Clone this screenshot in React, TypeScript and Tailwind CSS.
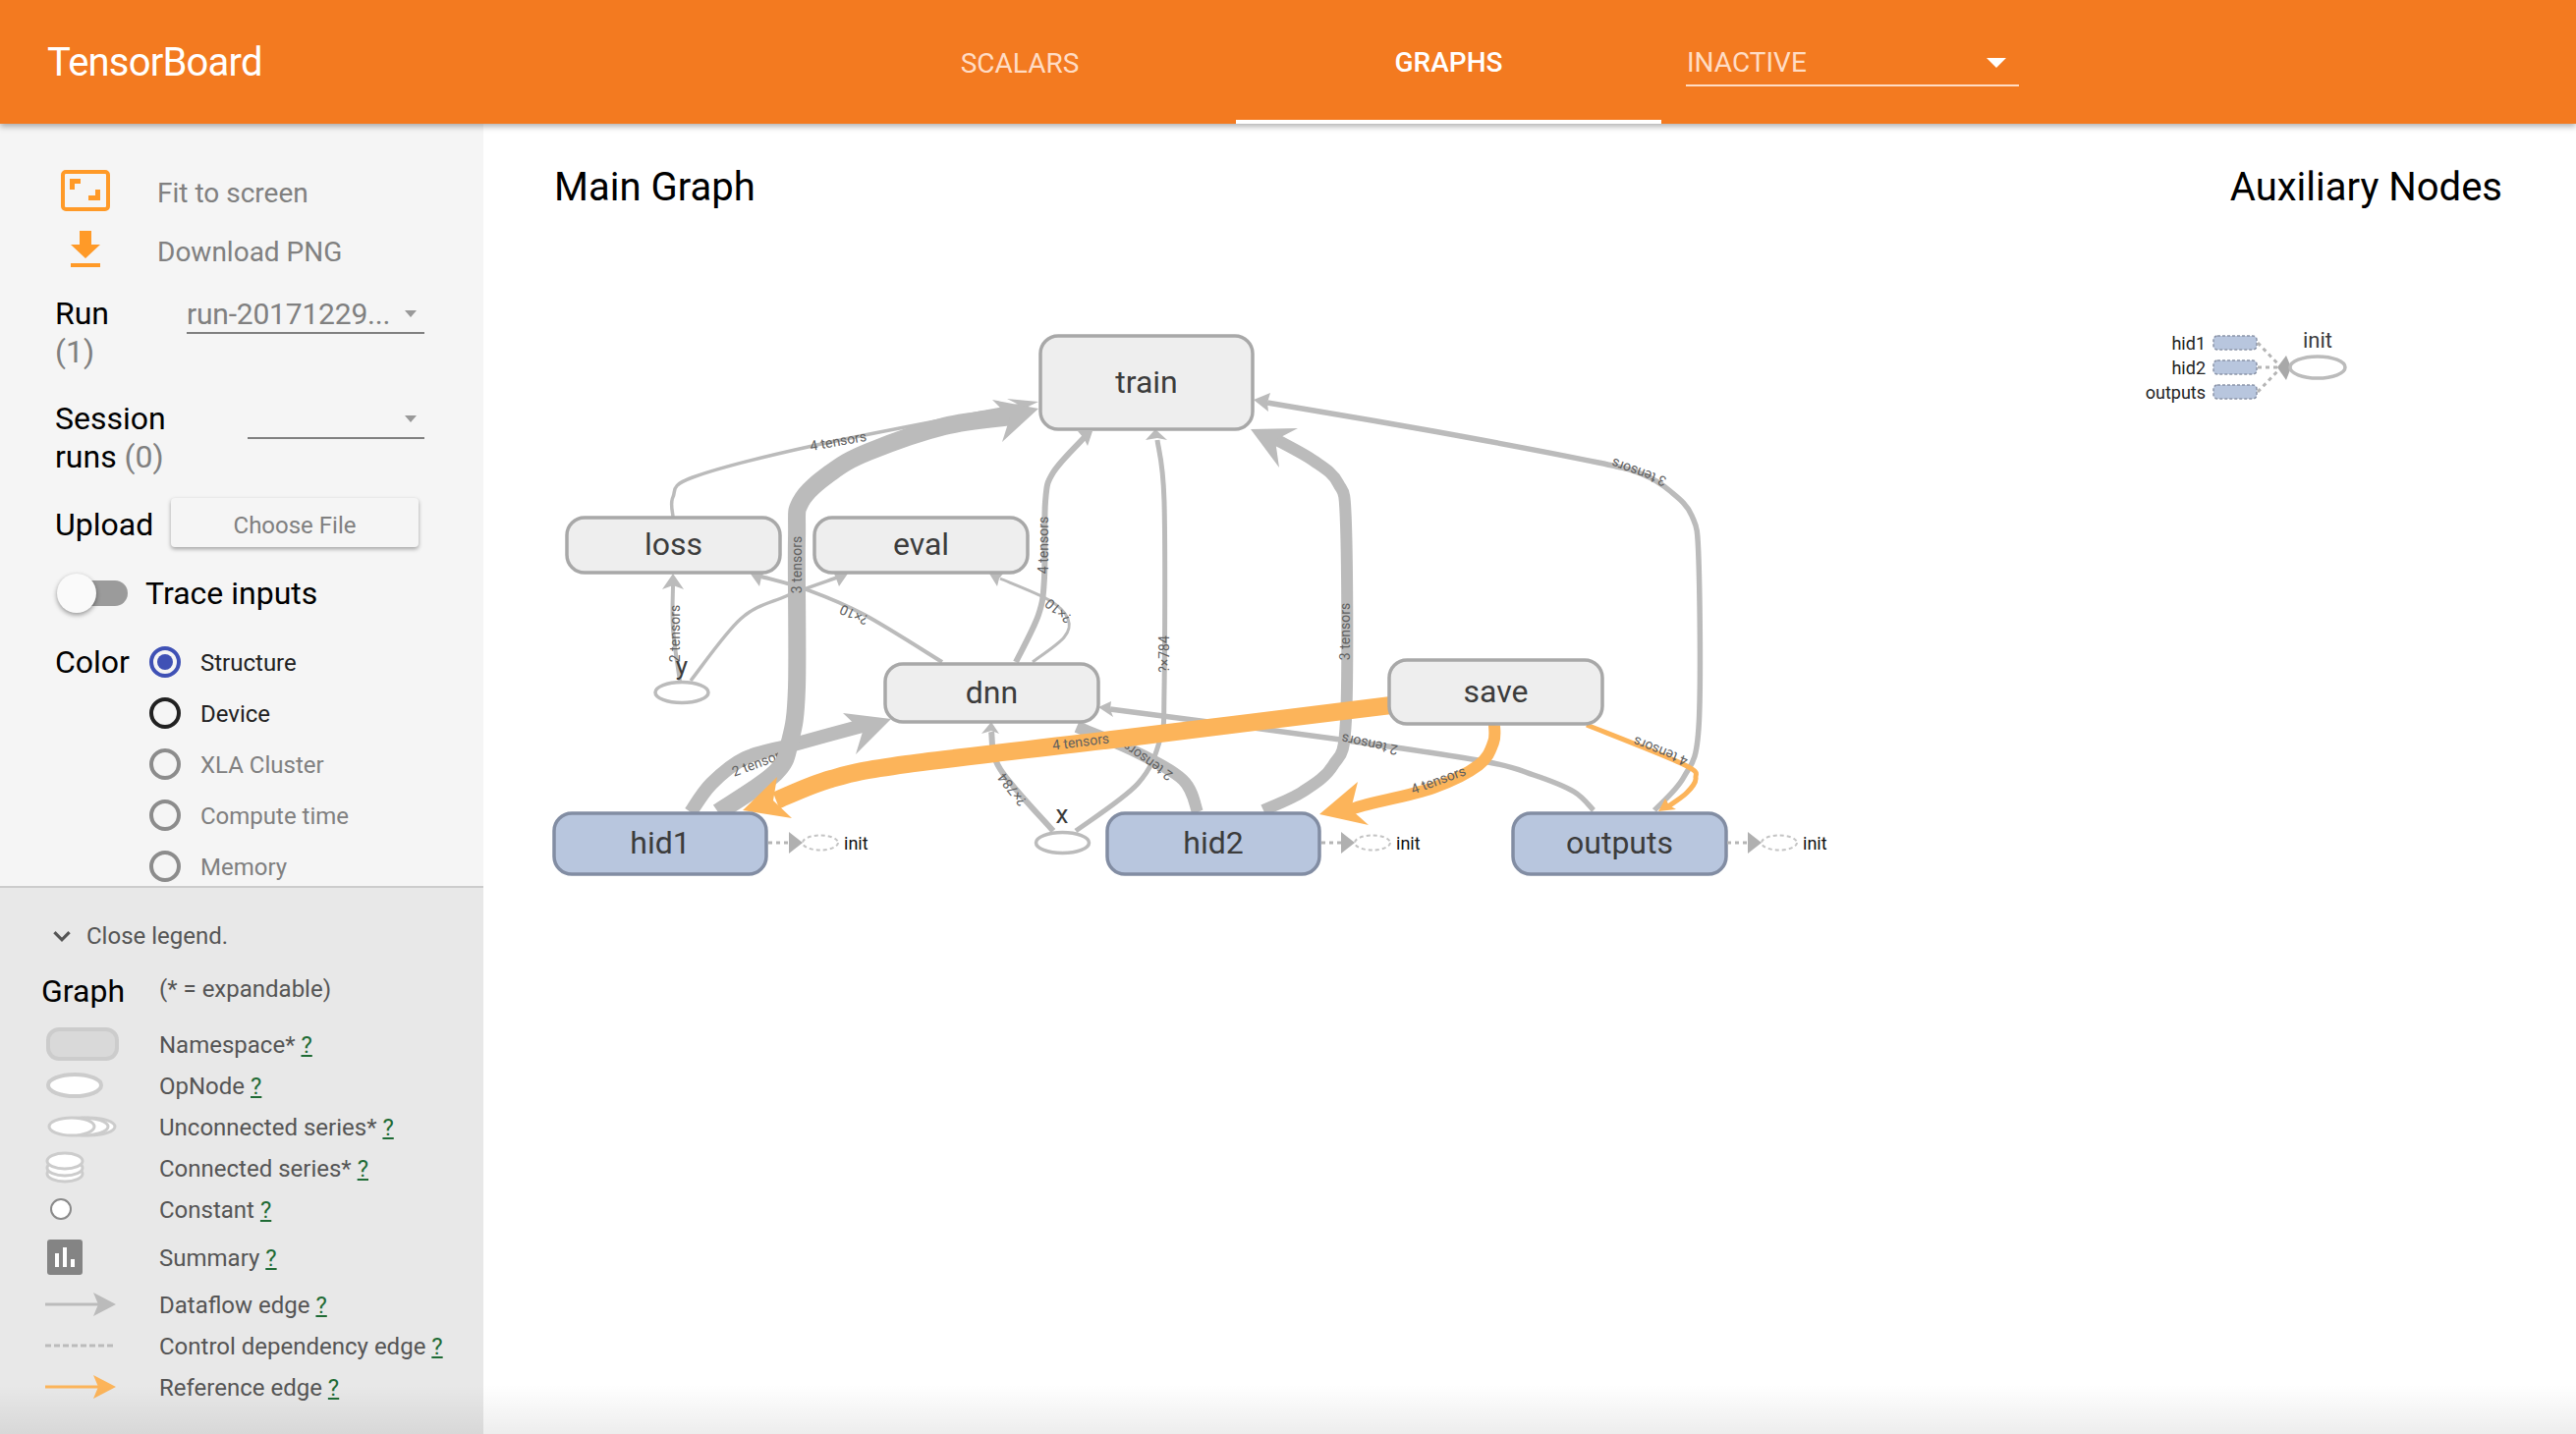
import type { ReactNode } from 'react'

type Pt = [number, number]

const GRAY = '#bbbbbb'
const ORANGE = '#fcb45a'

// catmull-rom through the points, good enough for the graph edges
function smooth(pts: Pt[]) {
  let d = `M${pts[0][0]} ${pts[0][1]}`
  for (let i = 0; i < pts.length - 1; i++) {
    const p0 = pts[i - 1] || pts[i]
    const p1 = pts[i]
    const p2 = pts[i + 1]
    const p3 = pts[i + 2] || p2
    const c1x = p1[0] + (p2[0] - p0[0]) / 6
    const c1y = p1[1] + (p2[1] - p0[1]) / 6
    const c2x = p2[0] - (p3[0] - p1[0]) / 6
    const c2y = p2[1] - (p3[1] - p1[1]) / 6
    d += ` C${c1x} ${c1y} ${c2x} ${c2y} ${p2[0]} ${p2[1]}`
  }
  return d
}

function Edge({ pts, w, head, color = GRAY }: { pts: Pt[]; w: number; head?: Pt[]; color?: string }) {
  return (
    <g>
      <path d={smooth(pts)} fill="none" stroke={color} strokeWidth={w} />
      {head && <polygon points={head.map((p) => p.join(',')).join(' ')} fill={color} />}
    </g>
  )
}

function EdgeLabel({ x, y, r, children }: { x: number; y: number; r: number; children: ReactNode }) {
  return (
    <text x={x} y={y} transform={`rotate(${r} ${x} ${y})`} textAnchor="middle" dominantBaseline="central" fontSize={14} fill="#5f5f5f">
      {children}
    </text>
  )
}

function GraphNode({ x, y, w, h, label, blue }: { x: number; y: number; w: number; h: number; label: string; blue?: boolean }) {
  return (
    <g>
      <rect x={x} y={y} width={w} height={h} rx={18} fill={blue ? '#b8c6de' : '#eeeeee'} stroke={blue ? '#828da3' : '#a8a8a8'} strokeWidth={3.5} />
      <text x={x + w / 2} y={y + h / 2 - 1} textAnchor="middle" dominantBaseline="central" fontSize={32} fill="#3c3c3c">
        {label}
      </text>
    </g>
  )
}

function InitStub({ x, ox, tx }: { x: number; ox: number; tx: number }) {
  return (
    <g>
      <line x1={x} y1={858} x2={ox - 30} y2={858} stroke="#b5b5b5" strokeWidth={3} strokeDasharray="4 4" />
      <polygon points={`${ox - 32},847 ${ox - 18},858 ${ox - 32},869`} fill="#b0b0b0" />
      <ellipse cx={ox} cy={858} rx={18} ry={7.5} fill="none" stroke="#c4c4c4" strokeWidth={2} strokeDasharray="4 3" />
      <text x={tx} y={858} dominantBaseline="central" fontSize={18} fill="#111">
        init
      </text>
    </g>
  )
}

function Graph() {
  return (
    <svg className="absolute inset-0" width={2130} height={1334} viewBox="492 126 2130 1334">
      {/* y / x constants */}
      <ellipse cx={694} cy={705} rx={27} ry={10.5} fill="#fff" stroke="#bbb" strokeWidth={3.5} />
      <ellipse cx={1081.5} cy={858} rx={27} ry={10.5} fill="#fff" stroke="#bbb" strokeWidth={3.5} />

      {/* thin edges */}
      <Edge w={3.5} pts={[[685, 526], [685, 506], [705, 486], [827, 454], [1041, 412]]} head={[[1025, 406], [1057, 409], [1036, 419], [1037, 412]]} />
      <Edge w={4} pts={[[692, 694], [685, 640], [685, 596]]} head={[[674, 600], [685, 584], [696, 600], [685, 596]]} />
      <EdgeLabel x={687} y={645} r={-90}>2 tensors</EdgeLabel>
      <Edge w={3.5} pts={[[703, 693], [754, 630], [800, 607], [852, 588]]} head={[[849, 584], [863, 584], [854, 597], [851, 589]]} />
      <Edge w={4} pts={[[959, 674], [880, 626], [823, 601], [775, 587]]} head={[[778, 582], [763, 583], [773, 597], [775, 588]]} />
      <EdgeLabel x={869} y={626} r={205}>?×10</EdgeLabel>
      <Edge w={3} pts={[[1051, 674], [1083, 649], [1087, 630], [1068, 611], [1018, 589]]} head={[[1021, 584], [1007, 584], [1015, 597], [1017, 589]]} />
      <EdgeLabel x={1077} y={622} r={220}>?×10</EdgeLabel>
      <Edge w={6} pts={[[1034, 674], [1057, 626], [1063, 588], [1064, 511], [1072, 481], [1104, 445]]} head={[[1097, 439], [1112, 439], [1107, 454], [1103, 446]]} />
      <EdgeLabel x={1062} y={555} r={-90}>4 tensors</EdgeLabel>
      <Edge w={5} pts={[[1095, 846], [1158, 798], [1181, 752], [1185, 703], [1185, 511], [1178, 448]]} head={[[1166, 448], [1176, 437], [1188, 448], [1178, 446]]} />
      <EdgeLabel x={1185} y={666} r={-90}>?×784</EdgeLabel>
      <Edge w={6} pts={[[1072, 846], [1018, 783], [1009, 745]]} head={[[999, 747], [1009, 735], [1017, 747], [1009, 744]]} />
      <EdgeLabel x={1030} y={804} r={232}>?×784</EdgeLabel>

      {/* hid1 thick edges */}
      <Edge w={14} pts={[[703, 827], [724, 798], [758, 772], [808, 758], [885, 737]]} head={[[858, 726], [907, 732], [871, 768], [878, 745]]} />
      <EdgeLabel x={773} y={776} r={-20}>2 tensors</EdgeLabel>
      <Edge w={18} pts={[[731, 827], [789, 787], [804, 755], [811, 700], [811, 550], [815, 511], [846, 481], [884, 460], [961, 434], [1030, 424]]} head={[[1010, 407], [1057, 416], [1020, 450], [1028, 425]]} />
      <text x={811} y={575} transform="rotate(-90 811 575)" textAnchor="middle" dominantBaseline="central" fontSize={14} fill="#5f5f5f">3 tensors</text>
      <EdgeLabel x={853} y={449} r={-10}>4 tensors</EdgeLabel>

      {/* right hand edges */}
      <Edge w={12} pts={[[1219, 827], [1204, 794], [1153, 764], [1096, 740]]} />
      <Edge w={12} pts={[[1286, 825], [1326, 806], [1357, 779], [1370, 733], [1370, 534], [1362, 492], [1337, 469], [1296, 446]]} head={[[1321, 436], [1273, 437], [1302, 476], [1298, 448]]} />
      <EdgeLabel x={1369} y={643} r={-90}>3 tensors</EdgeLabel>
      <Edge w={5.5} pts={[[1622, 825], [1602, 806], [1561, 789], [1510, 775], [1357, 752], [1130, 722]]} head={[[1131, 714], [1118, 720], [1133, 730], [1130, 722]]} />
      <EdgeLabel x={1394} y={758} r={192}>2 tensors</EdgeLabel>
      <Edge w={5.5} pts={[[1684, 825], [1714, 791], [1729, 741], [1729, 570], [1722, 525], [1700, 500], [1672, 483], [1627, 471], [1459, 439], [1290, 410]]} head={[[1293, 400], [1276, 407], [1291, 419], [1290, 410]]} />
      <EdgeLabel x={1668} y={481} r={200}>3 tensors</EdgeLabel>

      {/* reference edges */}
      <EdgeLabel x={1168} y={775} r={215}>2 tensors</EdgeLabel>
      <Edge color={ORANGE} w={18} pts={[[1416, 718], [1140, 752], [923, 778], [846, 793], [790, 815]]} head={[[791, 791], [756, 825], [806, 833], [787, 815]]} />
      <EdgeLabel x={1100} y={755} r={-7}>4 tensors</EdgeLabel>
      <Edge color={ORANGE} w={12} pts={[[1521, 738], [1520, 756], [1505, 779], [1459, 802], [1388, 820], [1368, 827]]} head={[[1382, 796], [1343, 829], [1393, 840], [1375, 824]]} />
      <EdgeLabel x={1464} y={794} r={-20}>4 tensors</EdgeLabel>
      <Edge color={ORANGE} w={5} pts={[[1615, 738], [1713, 778], [1726, 792], [1717, 807], [1698, 821]]} head={[[1695, 813], [1688, 826], [1706, 824], [1699, 820]]} />
      <EdgeLabel x={1690} y={765} r={202}>4 tensors</EdgeLabel>

      {/* nodes */}
      <GraphNode x={1059} y={342} w={216} h={95} label="train" />
      <GraphNode x={577} y={527} w={217} h={56} label="loss" />
      <GraphNode x={829} y={527} w={217} h={56} label="eval" />
      <GraphNode x={901} y={676} w={217} h={59} label="dnn" />
      <GraphNode x={1414} y={672} w={217} h={65} label="save" />
      <GraphNode x={564} y={828} w={216} h={62} label="hid1" blue />
      <GraphNode x={1127} y={828} w={216} h={62} label="hid2" blue />
      <GraphNode x={1540} y={828} w={217} h={62} label="outputs" blue />
      <text x={694} y={678} textAnchor="middle" dominantBaseline="central" fontSize={26} fill="#3c3c3c">y</text>
      <text x={1081} y={829} textAnchor="middle" dominantBaseline="central" fontSize={26} fill="#3c3c3c">x</text>

      <InitStub x={782} ox={835} tx={859} />
      <InitStub x={1345} ox={1397} tx={1421} />
      <InitStub x={1758} ox={1811} tx={1835} />

      {/* auxiliary nodes */}
      {[['hid1', 349], ['hid2', 374], ['outputs', 399]].map(([name, y]) => (
        <g key={name}>
          <text x={2245} y={y} textAnchor="end" dominantBaseline="central" fontSize={18} fill="#222">{name}</text>
          <rect x={2253} y={Number(y) - 7} width={44} height={14} rx={4} fill="#b8c6de" stroke="#8a94a8" strokeWidth={1.5} strokeDasharray="3 2" />
          <line x1={2298} y1={y} x2={2322} y2={374} stroke="#b5b5b5" strokeWidth={3} strokeDasharray="4 4" />
        </g>
      ))}
      <polygon points="2327,362 2332,374 2327,387 2318,374" fill="#a8a8a8" />
      <ellipse cx={2359} cy={374} rx={28} ry={11} fill="#fff" stroke="#bbb" strokeWidth={3.5} />
      <text x={2359} y={346} textAnchor="middle" dominantBaseline="central" fontSize={22} fill="#3c3c3c">init</text>
    </svg>
  )
}

function Radio({ label, state }: { label: string; state: 'on' | 'dark' | 'off' }) {
  return (
    <div className="flex h-[52px] items-center">
      <span
        className={
          state === 'on'
            ? 'flex h-8 w-8 items-center justify-center rounded-full border-4 border-[#3f51b5]'
            : state === 'dark'
              ? 'h-8 w-8 rounded-full border-4 border-[#212121]'
              : 'h-8 w-8 rounded-full border-4 border-[#8c8c8c]'
        }
      >
        {state === 'on' && <span className="h-4 w-4 rounded-full bg-[#3f51b5]" />}
      </span>
      <span className={state === 'off' ? 'ml-5 pt-[2px] text-[24px] text-[#808080]' : 'ml-5 pt-[2px] text-[24px] text-[#212121]'}>{label}</span>
    </div>
  )
}

function SelectCaret() {
  return <span className="h-0 w-0 border-x-[6px] border-t-[7px] border-x-transparent border-t-[#999]" />
}

function LegendRow({ icon, label, h }: { icon: ReactNode; label: string; h: string }) {
  return (
    <div className={`flex items-center ${h}`}>
      <div className="flex w-[119px] items-center">{icon}</div>
      <span className="whitespace-nowrap pt-[2px] text-[24px] text-[#555]">
        {label} <span className="text-[#1f6b35] underline">?</span>
      </span>
    </div>
  )
}

function Legend() {
  return (
    <div className="flex-1 border-t-2 border-[#cccccc] bg-[#e8e8e8]">
      <div className="mt-[32px] flex h-[34px] items-center pl-[50px] text-[24px] text-[#555]">
        <svg width="26" height="26" viewBox="0 0 24 24" className="mr-[12px]">
          <path d="M5 8.5 L12 15.5 L19 8.5" fill="none" stroke="#555" strokeWidth="3" />
        </svg>
        Close legend.
      </div>
      <div className="mt-[19px] flex h-[40px] items-center pl-[42px]">
        <span className="w-[120px] text-[32px] text-black">Graph</span>
        <span className="pb-[4px] text-[24px] text-[#555]">(* = expandable)</span>
      </div>
      <div className="mt-[13px] pl-[43px]">
        <LegendRow
          h="h-[42px]"
          label="Namespace*"
          icon={<svg width="80" height="36"><rect x="6" y="3" width="70" height="30" rx="11" fill="#d9d9d9" stroke="#cccccc" strokeWidth="4" /></svg>}
        />
        <LegendRow
          h="h-[42px]"
          label="OpNode"
          icon={<svg width="80" height="30"><ellipse cx="33" cy="15" rx="27" ry="11" fill="#fff" stroke="#cccccc" strokeWidth="4" /></svg>}
        />
        <LegendRow
          h="h-[42px]"
          label="Unconnected series*"
          icon={
            <svg width="80" height="26">
              <ellipse cx="47" cy="13" rx="27" ry="9" fill="#fff" stroke="#cccccc" strokeWidth="3" />
              <ellipse cx="40" cy="13" rx="27" ry="9" fill="#fff" stroke="#cccccc" strokeWidth="3" />
              <ellipse cx="30" cy="13" rx="23" ry="9" fill="#fff" stroke="#cccccc" strokeWidth="3" />
            </svg>
          }
        />
        <LegendRow
          h="h-[42px]"
          label="Connected series*"
          icon={
            <svg width="80" height="34">
              <ellipse cx="23" cy="23" rx="18" ry="8" fill="#fff" stroke="#cccccc" strokeWidth="3" />
              <ellipse cx="23" cy="17" rx="18" ry="8" fill="#fff" stroke="#cccccc" strokeWidth="3" />
              <ellipse cx="23" cy="10" rx="18" ry="8" fill="#fff" stroke="#cccccc" strokeWidth="3" />
            </svg>
          }
        />
        <LegendRow
          h="h-[42px]"
          label="Constant"
          icon={<svg width="80" height="26"><circle cx="19" cy="13" r="10" fill="#fff" stroke="#8a8a8a" strokeWidth="2" /></svg>}
        />
        <LegendRow
          h="h-[55px]"
          label="Summary"
          icon={
            <svg width="80" height="36">
              <rect x="5" y="0" width="36" height="36" rx="3" fill="#848484" />
              <rect x="13" y="14" width="4" height="14" fill="#fff" />
              <rect x="21" y="8" width="4" height="20" fill="#fff" />
              <rect x="29" y="20" width="4" height="8" fill="#fff" />
            </svg>
          }
        />
        <LegendRow
          h="h-[42px]"
          label="Dataflow edge"
          icon={
            <svg width="80" height="26">
              <line x1="3" y1="13" x2="60" y2="13" stroke="#bbb" strokeWidth="3" />
              <polygon points="52,1 75,13 52,25 57,13" fill="#bbb" />
            </svg>
          }
        />
        <LegendRow
          h="h-[42px]"
          label="Control dependency edge"
          icon={<svg width="80" height="10"><line x1="3" y1="5" x2="75" y2="5" stroke="#bbb" strokeWidth="3" strokeDasharray="6 3" /></svg>}
        />
        <LegendRow
          h="h-[42px]"
          label="Reference edge"
          icon={
            <svg width="80" height="26">
              <line x1="3" y1="13" x2="60" y2="13" stroke={ORANGE} strokeWidth="3" />
              <polygon points="52,1 75,13 52,25 57,13" fill={ORANGE} />
            </svg>
          }
        />
      </div>
    </div>
  )
}

export default function App() {
  return (
    <div className="relative flex h-[1460px] w-[2622px] flex-col overflow-hidden bg-white font-['Roboto',sans-serif]">
      <header className="relative z-10 flex h-[126px] shrink-0 items-center bg-[#f37a20] text-white shadow-[0_3px_6px_rgba(0,0,0,0.3)]">
        <div className="w-[825px] shrink-0 pl-[48px] pt-[1px] text-[40px] tracking-[-0.8px]">TensorBoard</div>
        <div className="flex h-[126px] w-[433px] items-center justify-center pr-[7px] pt-[3px] text-[28px] text-[#ffdcc4]">SCALARS</div>
        <div className="flex h-[126px] w-[433px] items-center justify-center border-b-4 border-white pt-[5px] text-[28px] font-medium">GRAPHS</div>
        <div className="ml-[25px] flex h-[50px] w-[339px] items-center justify-between border-b-2 border-[#ffdcc4] pr-[13px] pt-[3px] text-[28px] text-[#ffdcc4]">
          <span className="pl-[1px]">INACTIVE</span>
          <span className="h-0 w-0 border-x-[10px] border-t-[10px] border-x-transparent border-t-white" />
        </div>
      </header>

      <div className="flex min-h-0 flex-1">
        <aside className="flex w-[492px] shrink-0 flex-col bg-[#f5f5f5]">
          <div className="h-[776px] shrink-0 overflow-hidden pl-[56px] pt-[46px]">
            <div className="flex h-[44px] items-center text-[28px] text-[#808080]">
              <svg width="50" height="42" viewBox="0 0 50 42" className="ml-[6px] mr-[48px]">
                <rect x="2" y="2" width="46" height="38" rx="3" fill="none" stroke="#ff9a28" strokeWidth="4" />
                <path d="M9 20V9H20V14H14V20Z M40 20V31H28V26H35V20Z" fill="#ff9a28" />
              </svg>
              <span className="pt-[5px]">Fit to screen</span>
            </div>
            <div className="mt-[16px] flex h-[44px] items-center text-[28px] text-[#808080]">
              <svg width="50" height="38" viewBox="0 0 50 38" className="ml-[6px] mr-[48px]">
                <path d="M19 0H31V14H40L25 28L10 14H19Z M10 33H40V37H10Z" fill="#ff9a28" />
              </svg>
              <span className="pt-[5px]">Download PNG</span>
            </div>

            <div className="mt-[24px] flex h-[78px] items-start">
              <div className="w-[134px] text-[32px] leading-[39px] text-black">
                Run
                <div className="text-[#808080]">(1)</div>
              </div>
              <div className="flex h-[40px] w-[242px] items-center justify-between border-b-2 border-[#808080] pr-[8px] text-[30px] text-[#808080]">
                <span className="tracking-[-0.2px]">run-20171229...</span>
                <SelectCaret />
              </div>
            </div>

            <div className="mt-[29px] flex h-[80px] items-start">
              <div className="w-[196px] text-[32px] leading-[39px] text-black">
                Session
                <div>
                  runs <span className="text-[#808080]">(0)</span>
                </div>
              </div>
              <div className="flex h-[40px] w-[180px] items-center justify-end border-b-2 border-[#808080] pr-[8px]">
                <SelectCaret />
              </div>
            </div>

            <div className="mt-[20px] flex h-[50px] items-center">
              <span className="w-[118px] pt-[4px] text-[32px] text-black">Upload</span>
              <div className="flex h-[50px] w-[252px] items-center justify-center rounded-[4px] bg-[#f5f5f5] pt-[6px] text-[24px] text-[#808080] shadow-[0_2px_4px_rgba(0,0,0,0.35)]">
                Choose File
              </div>
            </div>

            <div className="mt-[27px] flex h-[40px] items-center">
              <div className="relative h-[40px] w-[74px]">
                <div className="absolute left-[9px] top-[7px] h-[26px] w-[65px] rounded-full bg-[#9b9b9b]" />
                <div className="absolute left-[2px] top-0 h-[40px] w-[40px] rounded-full bg-[#fafafa] shadow-[0_2px_5px_rgba(0,0,0,0.4)]" />
              </div>
              <span className="ml-[18px] text-[32px] text-black">Trace inputs</span>
            </div>

            <div className="mt-[24px] flex items-start">
              <span className="w-[96px] text-[32px] leading-[52px] text-black">Color</span>
              <div>
                <Radio label="Structure" state="on" />
                <Radio label="Device" state="dark" />
                <Radio label="XLA Cluster" state="off" />
                <Radio label="Compute time" state="off" />
                <Radio label="Memory" state="off" />
              </div>
            </div>
          </div>
          <Legend />
        </aside>

        <main className="relative flex-1">
          <Graph />
          <div className="relative flex justify-between pl-[72px] pr-[75px] pt-[41px] text-[40px] leading-[48px] text-black">
            <span>Main Graph</span>
            <span>Auxiliary Nodes</span>
          </div>
        </main>
      </div>

      <div className="pointer-events-none absolute inset-x-0 bottom-0 h-[50px] bg-gradient-to-t from-[#00000012] to-transparent" />
    </div>
  )
}
